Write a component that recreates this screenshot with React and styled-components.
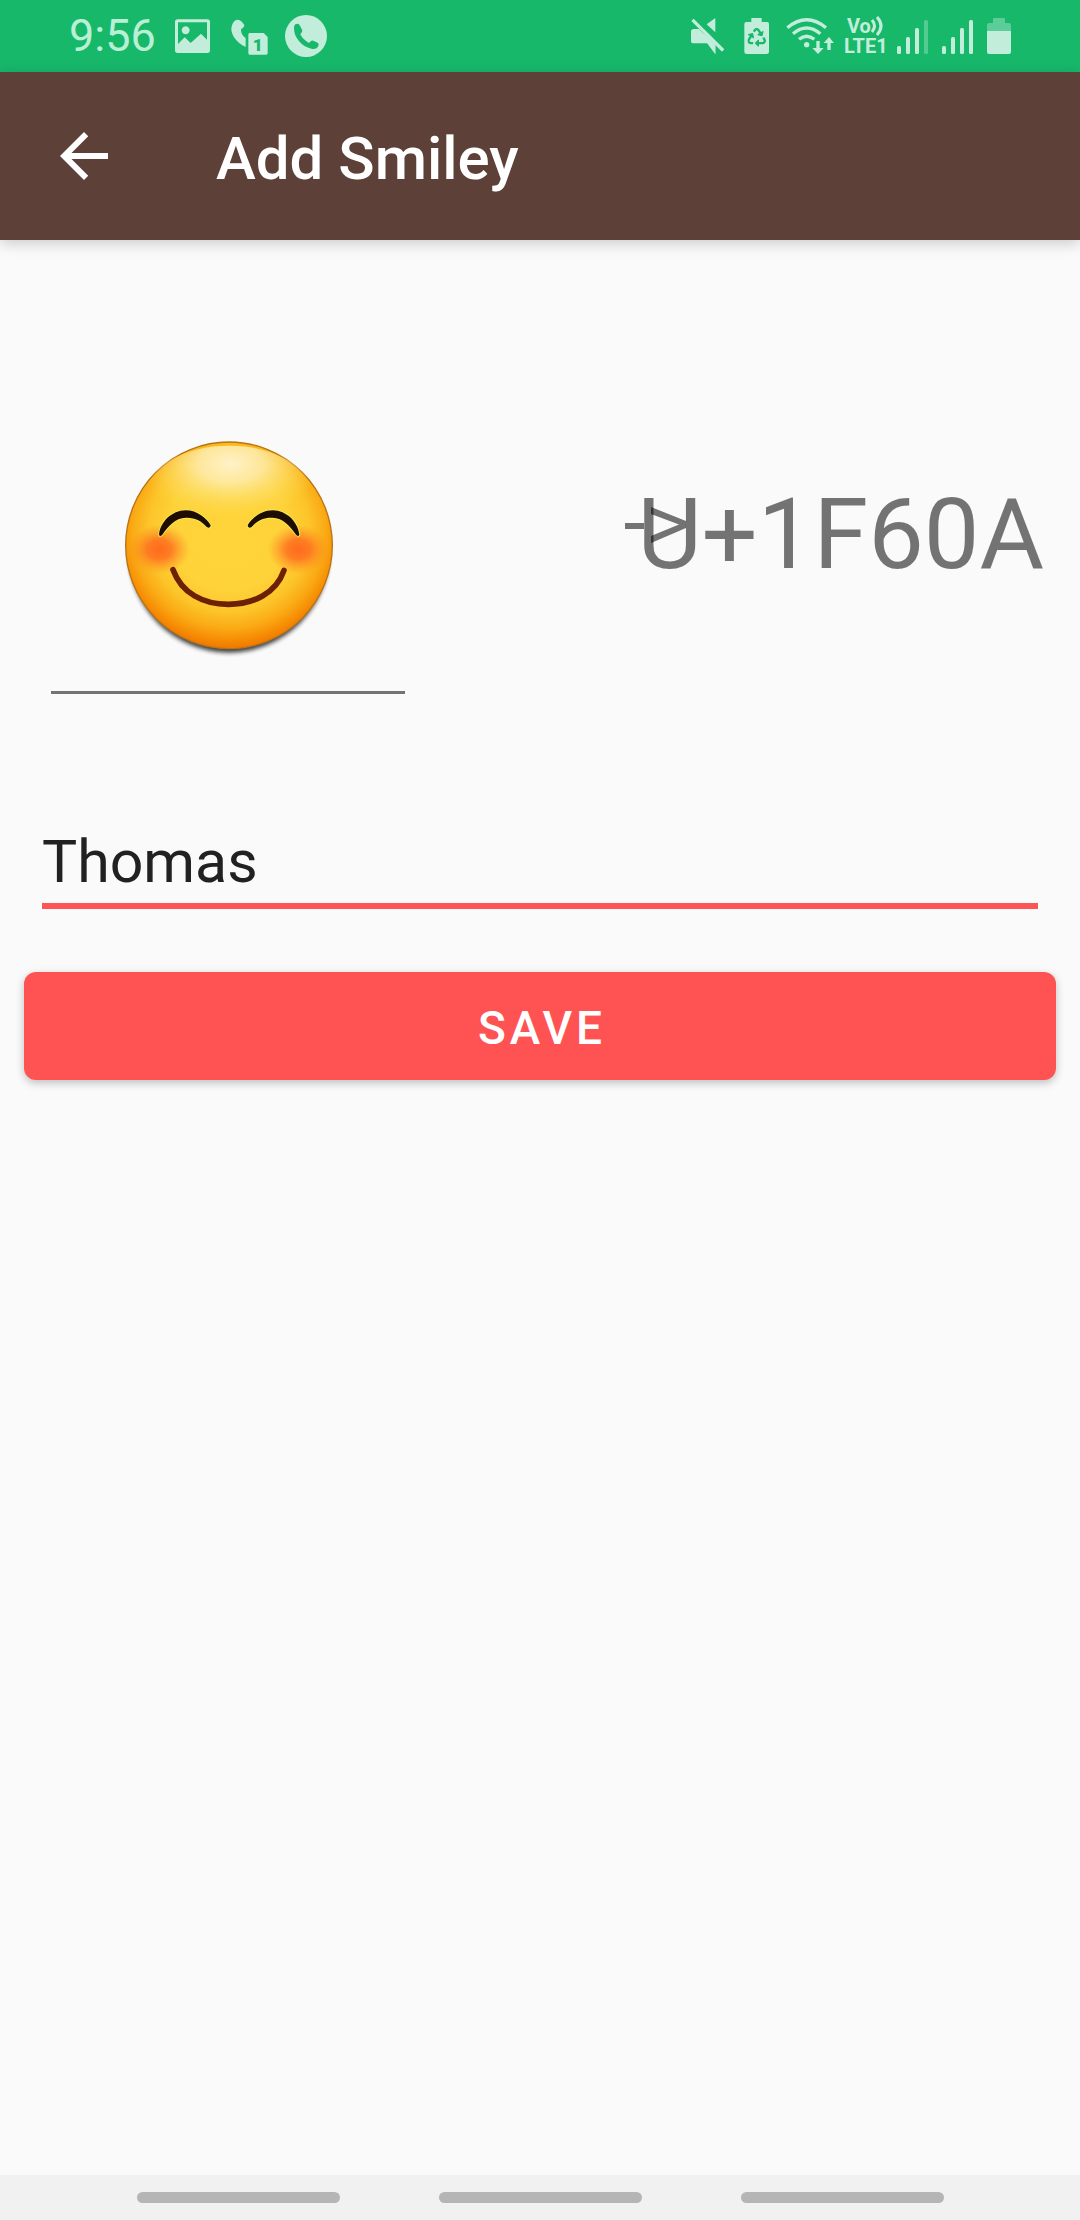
import React, { useState } from "react";
import styled, { createGlobalStyle } from "styled-components";
import { FaRecycle } from "react-icons/fa";

const GREEN = "#18b86b";
const MINT = "#c3eddb";

const GlobalStyle = createGlobalStyle`
  * { box-sizing: border-box; }
  body {
    margin: 0;
    background: #fafafa;
    font-family: Roboto, "Noto Sans", sans-serif;
  }
`;

const Screen = styled.div`
  display: flex;
  flex-direction: column;
  min-height: 100vh;
  background: #fafafa;
`;

const StatusBar = styled.div`
  display: flex;
  justify-content: space-between;
  align-items: center;
  height: 72px;
  padding: 0 69px;
  background: ${GREEN};
  color: ${MINT};
`;

const StatusGroup = styled.div`
  display: flex;
  align-items: center;
  gap: ${(p) => p.$gap}px;
`;

const Clock = styled.time`
  min-width: 89px;
  font-size: 45px;
  line-height: 72px;
  color: #b9f0d5;
`;

const StatusIcon = styled.svg`
  display: block;
  flex: none;
  width: ${(p) => p.$width}px;
  height: 72px;
  fill: ${MINT};
`;

const Carrier = styled.div`
  display: flex;
  flex-direction: column;
  width: 43px;
  font-size: 20px;
  font-weight: 700;
  line-height: 20px;
`;

const CarrierLine = styled.div`
  display: flex;
  padding-left: ${(p) => p.$indent || 0}px;
`;

const Waves = styled.svg`
  width: 14px;
  height: 20px;
  fill: none;
  stroke: ${MINT};
  stroke-width: 3;
`;

const AppBar = styled.header`
  display: flex;
  align-items: center;
  gap: 96px;
  height: 168px;
  padding: 0 48px;
  background: #5d4037;
  box-shadow: 0 3px 14px rgba(0, 0, 0, 0.2);
`;

const BackButton = styled.button`
  width: 72px;
  height: 72px;
  padding: 0;
  border: 0;
  background: none;

  svg {
    display: block;
    width: 72px;
    height: 72px;
    fill: #fff;
  }
`;

const Title = styled.h1`
  margin: 0;
  padding-top: 5px;
  color: #fff;
  font-size: 60px;
  font-weight: 500;
  line-height: 72px;
`;

const Form = styled.form`
  display: flex;
  flex: 1;
  flex-direction: column;
  padding: 180px 24px 0;
`;

const SmileyRow = styled.div`
  display: flex;
  justify-content: space-between;
  align-items: flex-start;
  padding: 0 12px 0 27px;
`;

const SmileyField = styled.div`
  position: relative;
  width: 354px;
`;

const SmileyInput = styled.input`
  display: block;
  width: 100%;
  height: 274px;
  padding: 0;
  border: 0;
  border-bottom: 3px solid #737373;
  outline: 0;
  background: none;
`;

const SmileyFace = styled.svg`
  position: absolute;
  top: 0;
  left: 0;
  width: 354px;
  height: 271px;
  pointer-events: none;
`;

const Code = styled.output`
  position: relative;
  padding-top: 54px;
  color: rgba(0, 0, 0, 0.54);
  font-size: 99px;
  line-height: 120px;
`;

const Strike = styled.svg`
  position: absolute;
  left: -12px;
  top: 80px;
  width: 66px;
  height: 50px;
  fill: currentColor;
`;

const NameInput = styled.input`
  height: 84px;
  margin: 131px 18px 0;
  padding: 0 0 6px;
  border: 0;
  border-bottom: 6px solid #fc5555;
  border-radius: 0;
  outline: 0;
  background: none;
  color: #212121;
  font-family: inherit;
  font-size: 59px;
  line-height: 72px;
`;

const SaveButton = styled.button`
  height: 108px;
  margin-top: 63px;
  padding: 4px 0 0 4px;
  border: 0;
  border-radius: 12px;
  background: #ff5252;
  box-shadow: 0 3px 8px rgba(0, 0, 0, 0.24);
  color: #fff;
  font-family: inherit;
  font-size: 46px;
  font-weight: 500;
  letter-spacing: 4px;
  text-transform: uppercase;
`;

const NavBar = styled.nav`
  display: flex;
  justify-content: center;
  align-items: center;
  gap: 99px;
  height: 45px;
  background: #f1f1f1;
`;

const NavPill = styled.button`
  width: 203px;
  height: 11px;
  padding: 0;
  border: 0;
  border-radius: 6px;
  background: #b5b5b5;
`;

const SignalBars = ({ weak }) => (
  <StatusIcon $width={35} viewBox="0 0 35 72">
    <rect x="0" y="46" width="4" height="8" rx="1.5" />
    <rect x="9" y="37" width="4" height="17" rx="1.5" />
    <rect x="18" y="28" width="4" height="26" rx="1.5" />
    <rect x="27" y="20" width="4" height="34" rx="1.5" opacity={weak ? 0.35 : 1} />
  </StatusIcon>
);

const EYE =
  "M357 343C362 305 395 272 437 271C472 271 500 295 512 316Q511 327 500 321C485 303 465 292 438 293C405 294 385 318 367 344Q358 352 357 343Z";

const Smiley = () => (
  <SmileyFace viewBox="33 0 1062 813" aria-hidden="true">
    <defs>
      <radialGradient id="skin" gradientUnits="userSpaceOnUse" cx="567" cy="335" r="355">
        <stop offset="0" stopColor="#ffd43a" />
        <stop offset="0.5" stopColor="#fed239" />
        <stop offset="0.68" stopColor="#fcc52a" />
        <stop offset="0.82" stopColor="#faa914" />
        <stop offset="0.92" stopColor="#f68c04" />
        <stop offset="1" stopColor="#ee7300" />
      </radialGradient>
      <radialGradient id="shine" gradientUnits="userSpaceOnUse" cx="0" cy="0" r="1" gradientTransform="translate(570 130) scale(275 165)">
        <stop offset="0" stopColor="#fff2c8" />
        <stop offset="0.35" stopColor="#feecae" stopOpacity="0.85" />
        <stop offset="1" stopColor="#fcdc4a" stopOpacity="0" />
      </radialGradient>
      <radialGradient id="blush">
        <stop offset="0" stopColor="#ff6a1c" />
        <stop offset="0.4" stopColor="#ff7020" stopOpacity="0.85" />
        <stop offset="1" stopColor="#ff8a20" stopOpacity="0" />
      </radialGradient>
      <filter id="soft">
        <feGaussianBlur stdDeviation="7" />
      </filter>
    </defs>
    <circle cx="567" cy="398" r="300" fill="#222" opacity="0.85" filter="url(#soft)" />
    <circle cx="567" cy="376" r="310" fill="url(#skin)" stroke="#b87414" strokeWidth="4" />
    <ellipse cx="567" cy="225" rx="248" ry="148" fill="url(#shine)" />
    <ellipse cx="358" cy="388" rx="92" ry="74" fill="url(#blush)" />
    <ellipse cx="775" cy="388" rx="92" ry="74" fill="url(#blush)" />
    <g fill="#1d0d03" stroke="#f6ee50" strokeWidth="5" paintOrder="stroke">
      <path d={EYE} />
      <path d={EYE} transform="translate(1135 0) scale(-1 1)" />
    </g>
    <path
      d="M399 449C425 520 490 553 565 553C640 553 708 520 732 451"
      fill="none"
      stroke="#6c2004"
      strokeWidth="17"
      strokeLinecap="round"
    />
  </SmileyFace>
);

export default function App() {
  const [name, setName] = useState("Thomas");
  const [smiley, setSmiley] = useState("");

  return (
    <Screen>
      <GlobalStyle />
      <StatusBar>
        <StatusGroup $gap={17}>
          <Clock>9:56</Clock>
          <StatusIcon $width={39} viewBox="375 0 117 216">
            <path
              fillRule="evenodd"
              d="M383 58H472Q480 58 480 66V151Q480 159 472 159H383Q375 159 375 151V66Q375 58 383 58ZM384 67V132L404 112L422 129L453 101L471 119V67ZM407 79A12 12 0 1 1 406.900 79Z"
            />
          </StatusIcon>
          <StatusIcon $width={37} viewBox="543 0 111 216">
            <path d="M558 60Q567 57 576 66L583 75Q584 79 579 83L573 88Q572 104 587 115V141C560 128 543 105 544 84Q547 66 558 60Z" />
            <path d="M599 99H641L653 111V159Q653 164 648 164H599Q595 164 595 159V104Q595 99 599 99Z" />
            <text x="608" y="152" fontFamily="Roboto, sans-serif" fontWeight="900" fontSize="52" fill={GREEN}>1</text>
          </StatusIcon>
          <StatusIcon $width={42} viewBox="705 0 126 216">
            <circle cx="768" cy="108" r="63" />
            <path
              fill={GREEN}
              d="M736 73Q746 68 750 77L757 91Q758 96 751 103Q758 118 777 129Q784 120 790 122L803 128Q808 131 804 140Q798 149 784 146C755 140 731 112 732 84Q732 77 736 73Z"
            />
          </StatusIcon>
        </StatusGroup>
        <StatusGroup $gap={10}>
          <StatusIcon $width={43} viewBox="64 0 129 216">
            <path d="M72 87H88L137 136V162L113 130H72Q64 130 64 122V95Q64 87 72 87Z" />
            <path d="M113 130L137 162V132L100 98Z" />
            <path d="M137 54V97L111 73Z" />
            <path d="M72 56L164 148L157 155L65 63Z" />
          </StatusIcon>
          <StatusIcon $width={32} viewBox="221 0 96 216">
            <path d="M243 54H274V66H290Q296 66 296 72V155Q296 162 289 162H229Q222 162 222 155V72Q222 66 228 66H243Z" />
            <FaRecycle x="231" y="84" size="56" color={GREEN} fill={GREEN} />
          </StatusIcon>
          <StatusIcon $width={48} viewBox="347 0 144 216">
            <g fill="none" stroke={MINT} strokeWidth="10">
              <path d="M351 83Q409 35 467 83" />
              <path d="M368 101Q409 67 450 101" />
              <path d="M386 118Q409 99 432 118" />
            </g>
            <circle cx="409" cy="134" r="8" />
            <path d="M438 123H448V144H460L443 162L426 144H438Z" />
            <path d="M471 150H481V129H491L476 111L460 129H471Z" />
          </StatusIcon>
          <Carrier>
            <CarrierLine $indent={3}>
              Vo
              <Waves viewBox="0 0 14 20">
                <path d="M1 4Q6 10 1 16" />
                <path d="M6 1Q14 10 6 19" />
              </Waves>
            </CarrierLine>
            <CarrierLine>LTE1</CarrierLine>
          </Carrier>
          <SignalBars weak />
          <SignalBars />
          <StatusIcon $width={24} viewBox="0 0 24 72">
            <path opacity="0.4" d="M7 18H17Q18 18 18 19V23H22Q24 23 24 25V31H0V25Q0 23 2 23H6V19Q6 18 7 18Z" />
            <path d="M0 31H24V52Q24 54 22 54H2Q0 54 0 52Z" />
          </StatusIcon>
        </StatusGroup>
      </StatusBar>

      <AppBar>
        <BackButton type="button" aria-label="Back">
          <svg viewBox="0 0 24 24">
            <path d="M20 11H7.830l5.590-5.590L12 4l-8 8 8 8 1.410-1.410L7.830 13H20v-2z" />
          </svg>
        </BackButton>
        <Title>Add Smiley</Title>
      </AppBar>

      <Form onSubmit={(e) => e.preventDefault()}>
        <SmileyRow>
          <SmileyField>
            <SmileyInput aria-label="Smiley" value={smiley} onChange={(e) => setSmiley(e.target.value)} />
            <Smiley />
          </SmileyField>
          <Code>
            <Strike viewBox="0 0 66 50" aria-hidden="true">
              <path d="M0 23H19V29H0Z" />
              <path d="M26 7L61 21V28L26 43V36L54 24.500L26 14Z" />
            </Strike>
            U+1F60A
          </Code>
        </SmileyRow>
        <NameInput aria-label="Name" value={name} onChange={(e) => setName(e.target.value)} />
        <SaveButton type="submit">Save</SaveButton>
      </Form>

      <NavBar>
        <NavPill type="button" aria-label="Recent apps" />
        <NavPill type="button" aria-label="Home" />
        <NavPill type="button" aria-label="Go back" />
      </NavBar>
    </Screen>
  );
}
